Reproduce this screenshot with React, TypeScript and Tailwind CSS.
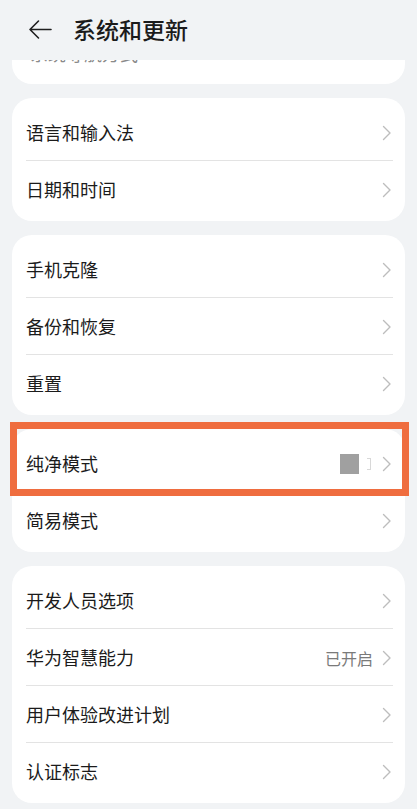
const font = { fontFamily: '"Noto Sans CJK SC", "Noto Sans", sans-serif' };

interface Item {
  label: string;
  value?: string;
  placeholder?: boolean;
}

const groups: Item[][] = [
  [{ label: "语言和输入法" }, { label: "日期和时间" }],
  [{ label: "手机克隆" }, { label: "备份和恢复" }, { label: "重置" }],
  [{ label: "纯净模式", placeholder: true }, { label: "简易模式" }],
  [
    { label: "开发人员选项" },
    { label: "华为智慧能力", value: "已开启" },
    { label: "用户体验改进计划" },
    { label: "认证标志" },
  ],
];

const Chevron = () => (
  <svg width="10" height="16" viewBox="0 0 10 16" fill="none">
    <path d="M1.5 1.5 L8 8 L1.5 14.5" stroke="#bdbdbd" strokeWidth="1.4" strokeLinecap="round" strokeLinejoin="round" />
  </svg>
);

const Row = ({ item, last }: { item: Item; last: boolean }) => (
  <div className="relative flex h-[57px] items-center pl-[14px] pr-[13px]">
    <span className="flex-1 text-[18px] text-[#1b1b1b]">{item.label}</span>
    {item.value && <span className="mr-[9px] text-[16px] text-[#7a7a7a]">{item.value}</span>}
    {item.placeholder && (
      <div className="mr-[11px] flex items-center gap-[8px]">
        <div className="h-[20px] w-[19px] bg-[#a0a0a0]" />
        <div className="h-[12px] w-[4px] border-r border-t border-b border-[#d8d8d8]" />
      </div>
    )}
    <Chevron />
    {!last && <div className="absolute bottom-0 left-[14px] right-[12px] h-px bg-[#e3e3e3]" />}
  </div>
);

export default function App() {
  return (
    <div className="min-h-[809px] w-[417px] overflow-hidden bg-[#f1f3f5]" style={font}>
      {/* header */}
      <div className="flex h-[60px] items-center pl-[28px] pb-[2px]">
        <svg width="24" height="21" viewBox="0 0 24 21" fill="none">
          <path d="M23 10.5 H2 M10.5 2 L2 10.5 L10.5 19" stroke="#1f1f1f" strokeWidth="1.6" strokeLinecap="round" strokeLinejoin="round" />
        </svg>
        <span className="ml-[21px] text-[23px] font-medium text-[#1b1b1b]">系统和更新</span>
      </div>

      <div className="px-[12px]">
        {/* card scrolled under the header: only the bottom of its last row shows */}
        <div className="h-[24px] overflow-hidden rounded-b-[20px] bg-white">
          <div className="-mt-[17px] pl-[18px] text-[18px] leading-[20px] text-[#8a8a8a]">系统导航方式</div>
        </div>

        <div className="mt-[14px] flex flex-col gap-[14px]">
          {groups.map((g, gi) => (
            <div key={gi} className="relative rounded-[20px] bg-white pt-[6px] pb-[3px]">
              {g.map((item, i) => (
                <Row key={item.label} item={item} last={i === g.length - 1} />
              ))}
              {gi === 2 && (
                <div className="absolute -left-[2px] -right-[4px] -top-[7px] h-[74px] border-[7px] border-[#ef6d3f]" />
              )}
            </div>
          ))}
        </div>
      </div>
    </div>
  );
}
